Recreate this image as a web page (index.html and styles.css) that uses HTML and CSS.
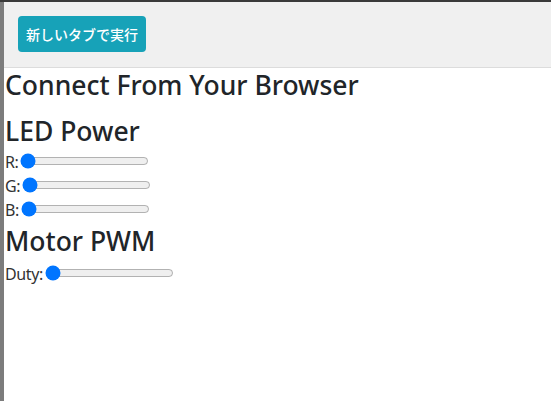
FILE: index.html
```html
<!doctype html>
<html lang="ja">
<head>
	<meta charset="UTF-8">
	<title>Connect From Your Browser</title>
	<link rel="stylesheet" href="styles.css">
</head>
<body>
	<div class="frame">
		<div class="toolbar">
			<button class="btn-run">新しいタブで実行</button>
		</div>
		<div class="content">
			<h3 class="title">Connect From Your Browser</h3>
			<div class="section">
				<h3>LED Power</h3>
				<div class="row"><span class="lbl">R:</span><input type="range" min="0" max="255" value="0"></div>
				<div class="row"><span class="lbl">G:</span><input type="range" min="0" max="255" value="0"></div>
				<div class="row"><span class="lbl">B:</span><input type="range" min="0" max="255" value="0"></div>
			</div>
			<div class="section">
				<h3>Motor PWM</h3>
				<div class="row duty"><span class="lbl">Duty:</span><input type="range" min="0" max="100" value="0"></div>
			</div>
		</div>
	</div>
</body>
</html>
```

FILE: styles.css
```css
*{
	margin: 0;
	padding: 0;
	box-sizing: border-box;
}
html, body{
	height: 100%;
}
body{
	background: #fff;
	color: #212529;
	font-family: "Noto Sans", "Noto Sans CJK JP", sans-serif;
	border-top: 2px solid #3a3a3a;
}
.frame{
	height: 100%;
	border-left: 4px solid #7c7c7c;
}
.toolbar{
	height: 66px;
	background: #f0f0f0;
	border-bottom: 1px solid #dcdcdc;
	padding: 14px 0 0 14px;
}
.btn-run{
	height: 36px;
	padding: 0 8px;
	border: none;
	border-radius: 4px;
	background: #17a2b8;
	color: #fff;
	font-family: "Noto Sans CJK JP", sans-serif;
	font-size: 14px;
	font-weight: 500;
	line-height: 36px;
}
.content{
	padding-left: 1px;
}
h3{
	font-size: 26.5px;
	font-weight: 500;
	line-height: 34px;
	margin-bottom: 2px;
}
.title{
	margin-bottom: 12px;
}
.section + .section{
	margin-top: 2px;
}
.row{
	font-size: 16px;
	letter-spacing: -0.4px;
	line-height: 24px;
	height: 24px;
	display: flex;
	align-items: center;
	color: #333;
}
.row.duty{
	margin-top: 4px;
}
.row input{
	margin: 0 2px;
	position: relative;
	top: -1px;
}
```
